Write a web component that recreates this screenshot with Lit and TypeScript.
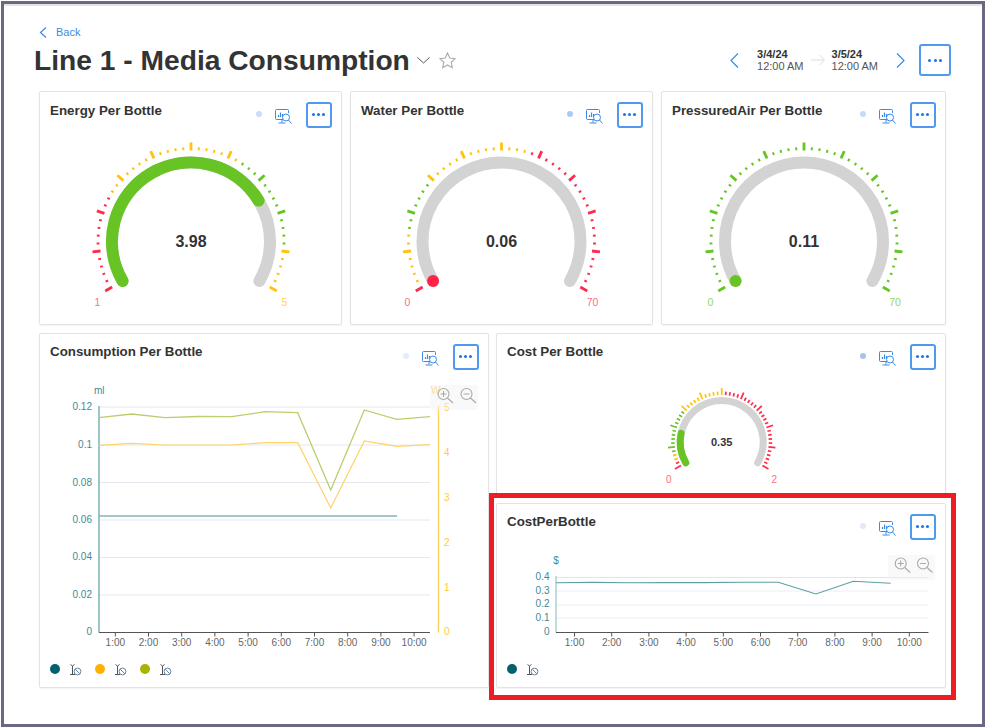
import { LitElement, html, css, svg } from "lit";
import { customElement } from "lit/decorators.js";

const RED = "#ff2a4d", YEL = "#ffc20e", GRN = "#66c424";
const pt = (cx: number, cy: number, r: number, deg: number) => {
  const a = (deg * Math.PI) / 180;
  return [cx + r * Math.cos(a), cy - r * Math.sin(a)];
};
const arc = (cx: number, cy: number, r: number, from: number, to: number) => {
  const [x0, y0] = pt(cx, cy, r, from), [x1, y1] = pt(cx, cy, r, to);
  return `M${x0} ${y0}A${r} ${r} 0 ${from - to > 180 ? 1 : 0} 1 ${x1} ${y1}`;
};
const path = (p: number[][]) => "M" + p.map((q) => q.join(" ")).join("L");

type Zone = [number, string];
interface Gauge {
  cx: number; cy: number; r: number; w: number; frac: number; value: string; valueSize: number;
  zones: Zone[]; lo: string; hi: string; loX: number; hiX: number; labelY: number; labelSize: number;
  maj: [number, number, number]; min: [number, number, number]; dot?: string;
}
function gauge(g: Gauge) {
  const ticks = [];
  for (let i = 0; i <= 50; i++) {
    const major = i % 5 === 0;
    const [r0, r1, sw] = major ? g.maj : g.min;
    const deg = 210 - 4.8 * i;
    const color = g.zones.find((z) => i <= z[0])![1];
    const [a, b] = [pt(g.cx, g.cy, r0, deg), pt(g.cx, g.cy, r1, deg)];
    ticks.push(svg`<line x1=${a[0]} y1=${a[1]} x2=${b[0]} y2=${b[1]} stroke=${color} stroke-width=${sw}></line>`);
  }
  const end = 210 - 240 * g.frac;
  const [mx, my] = pt(g.cx, g.cy, g.r, 210);
  const loCol = g.zones[0][1], hiCol = g.zones[g.zones.length - 1][1];
  return svg`
    ${ticks}
    <path d=${arc(g.cx, g.cy, g.r, 210, -30)} fill="none" stroke="#d3d3d3" stroke-width=${g.w} stroke-linecap="round"></path>
    ${g.frac > 0 ? svg`<path d=${arc(g.cx, g.cy, g.r, 210, end)} fill="none" stroke="#67c424" stroke-width=${g.w} stroke-linecap="round"></path>` : ""}
    ${g.dot ? svg`<circle cx=${mx} cy=${my} r="6" fill=${g.dot}></circle>` : ""}
    <text class="val" x=${g.cx} y=${g.cy} font-size=${g.valueSize} text-anchor="middle" dominant-baseline="central">${g.value}</text>
    <text x=${g.loX} y=${g.labelY} font-size=${g.labelSize} fill=${loCol} opacity=".7" text-anchor="middle" dominant-baseline="central">${g.lo}</text>
    <text x=${g.hiX} y=${g.labelY} font-size=${g.labelSize} fill=${hiCol} opacity=".7" text-anchor="middle" dominant-baseline="central">${g.hi}</text>`;
}

const big = { r: 79, w: 12, valueSize: 16, labelY: 302, labelSize: 10.5, maj: [91, 99, 2.8] as [number, number, number], min: [91.6, 94.4, 2] as [number, number, number] };

function zoomTools(x: number, y: number, w: number, h: number, c1: number, c2: number, cy: number) {
  const mag = (cx: number, plus: boolean) => svg`
    <circle cx=${cx} cy=${cy} r="5.5" fill="none" stroke="#aaa" stroke-width="1.1"></circle>
    <line x1=${cx + 4} y1=${cy + 4} x2=${cx + 9.5} y2=${cy + 9} stroke="#aaa" stroke-width="1.1"></line>
    <line x1=${cx - 3} y1=${cy} x2=${cx + 3} y2=${cy} stroke="#aaa" stroke-width="1.1"></line>
    ${plus ? svg`<line x1=${cx} y1=${cy - 3} x2=${cx} y2=${cy + 3} stroke="#aaa" stroke-width="1.1"></line>` : ""}`;
  return svg`<rect x=${x} y=${y} width=${w} height=${h} rx="3" fill="#f3f3f3" fill-opacity=".5"></rect>${mag(c1, true)}${mag(c2, false)}`;
}

function xAxis(x0: number, x1: number, first: number, step: number, y: number) {
  const out = [svg`<line x1=${x0} y1=${y} x2=${x1} y2=${y} stroke="#555" stroke-width="1"></line>`];
  for (let i = 0; i < 10; i++) {
    const x = first + step * i;
    out.push(svg`<line x1=${x} y1=${y} x2=${x} y2=${y + 4} stroke="#555" stroke-width="1"></line>
      <text class="xl" x=${x} y=${y + 9.5} text-anchor="middle" dominant-baseline="central">${i + 1}:00</text>`);
  }
  return out;
}

const consumptionChart = () => {
  const grid = [407, 445, 482.5, 520, 557.5, 595];
  const left: [string, number][] = [["0.12", 406.5], ["0.1", 444.5], ["0.08", 482], ["0.06", 519], ["0.04", 556.5], ["0.02", 594], ["0", 631]];
  const right: [string, number][] = [["5", 407], ["4", 452], ["3", 497], ["2", 542], ["1", 587], ["0", 631]];
  const xs = [99, 131.7, 165, 198, 231.7, 265, 297.7, 330.7, 364.3, 396.7, 430];
  const green = [417.7, 414, 417.7, 416.5, 416.7, 411.7, 412.7, 490, 410, 419.3, 416.7];
  const orange = [445.3, 443.3, 445, 445, 445, 442.7, 442.7, 508, 441, 446.3, 444.7];
  return svg`<svg class="plot" width="448" height="280" viewBox="40 380 448 280">
    ${grid.map((y) => svg`<line x1="99" y1=${y} x2="430" y2=${y} stroke="#e6e8f0" stroke-width="1"></line>`)}
    <line x1="99" y1="406" x2="99" y2="632.5" stroke="#9ac5c9" stroke-width="2"></line>
    <line x1="438.5" y1="406" x2="438.5" y2="632.5" stroke="#ffd25e" stroke-width="1.4"></line>
    ${left.map(([t, y]) => svg`<text class="yl" x="92" y=${y} text-anchor="end" dominant-baseline="central">${t}</text>`)}
    ${right.map(([t, y]) => svg`<text class="yr" x="444" y=${y} dominant-baseline="central">${t}</text>`)}
    <text class="yl" x="94" y="390.5" dominant-baseline="central">ml</text>
    <text class="yr" x="431" y="390.5" dominant-baseline="central">W</text>
    <path d=${path(xs.map((x, i) => [x, green[i]]))} fill="none" stroke="#bfcc70" stroke-width="1.3"></path>
    <path d=${path(xs.map((x, i) => [x, orange[i]]))} fill="none" stroke="#ffd266" stroke-width="1.2"></path>
    <line x1="99" y1="516" x2="397" y2="516" stroke="#84b3b9" stroke-width="1.5"></line>
    ${xAxis(99, 430, 115.3, 33.2, 632.5)}
    ${zoomTools(430, 385, 48, 25, 443.5, 466.5, 394)}
  </svg>`;
};

const costChart = () => {
  const left: [string, number][] = [["0.4", 576], ["0.3", 590], ["0.2", 603.5], ["0.1", 617.5], ["0", 631]];
  const pts = [[556, 582.7], [593, 582.4], [630, 582.8], [667, 582.6], [704, 582.6], [741, 582.2], [778.3, 582.2], [816, 594], [853.3, 581.3], [890.7, 583.3]];
  return svg`<svg class="plot" width="448" height="110" viewBox="497 550 448 110">
    ${[577.5, 591, 605, 618].map((y, i) => svg`<line x1="556" y1=${y} x2="928.5" y2=${y} stroke=${i ? "#eceef4" : "#dfe5ea"} stroke-width="1"></line>`)}
    <line x1="556" y1="576" x2="556" y2="632.5" stroke="#9ac5c9" stroke-width="1.2"></line>
    ${left.map(([t, y]) => svg`<text class="yl" x="549.5" y=${y} text-anchor="end" dominant-baseline="central">${t}</text>`)}
    <text class="yl" x="556" y="560" text-anchor="middle" dominant-baseline="central">$</text>
    <path d=${path(pts)} fill="none" stroke="#5f9ea6" stroke-width="1.1"></path>
    ${xAxis(556, 928.5, 574.5, 37.2, 632.5)}
    ${zoomTools(888, 555, 47, 25, 900.7, 923, 563.5)}
  </svg>`;
};

const g1 = svg`<svg class="plot" width="301" height="186" viewBox="40 138 301 186">${gauge({ ...big, cx: 191, cy: 241.5, frac: 0.745, value: "3.98", zones: [[12, RED], [31, YEL], [44, GRN], [50, YEL]], lo: "1", hi: "5", loX: 97.5, hiX: 284.5 })}</svg>`;
const g2 = svg`<svg class="plot" width="301" height="186" viewBox="351 138 301 186">${gauge({ ...big, cx: 501.5, cy: 241.5, frac: 0, value: "0.06", zones: [[0, RED], [7, YEL], [14, GRN], [28, YEL], [50, RED]], lo: "0", hi: "70", loX: 407.5, hiX: 592.5, dot: "#ff2445" })}</svg>`;
const g3 = svg`<svg class="plot" width="283" height="186" viewBox="662 138 283 186">${gauge({ ...big, cx: 804, cy: 241.5, frac: 0, value: "0.11", zones: [[50, GRN]], lo: "0", hi: "70", loX: 710.5, hiX: 895, dot: "#67c424" })}</svg>`;
const g5 = svg`<svg class="plot" width="448" height="120" viewBox="497 380 448 120">${gauge({ cx: 721.7, cy: 442, r: 41.5, w: 7, frac: 0.175, value: "0.35", valueSize: 11, zones: [[1, RED], [3, YEL], [14, GRN], [25, YEL], [50, RED]], lo: "0", hi: "2", loX: 668.7, hiX: 774.3, labelY: 479, labelSize: 10, maj: [47, 54, 1.7], min: [47, 50.5, 1.7] })}</svg>`;

const monitor = html`<svg class="mon" viewBox="0 0 17 16" width="17" height="16" fill="none" stroke="#3b8ae6" stroke-width="1">
  <path d="M9.5 10.5H1.5a1 1 0 0 1-1-1V1.500a1 1 0 0 1 1-1h11a1 1 0 0 1 1 1V4"></path>
  <path d="M3.500 8V6M5.500 8V3.500M7.500 8V5" stroke-width="1.200"></path>
  <path d="M7 10.500V13.500M3.500 14h7"></path>
  <circle cx="11" cy="8.500" r="3.500" fill="#fff"></circle>
  <path d="M13.500 11l3 3.500"></path>
</svg>`;

const legendIcon = html`<svg class="lg" viewBox="0 0 13 12" width="13" height="12" fill="none">
  <path d="M1.500 .5l2 1.500M5.500 .5l-2 1.500M3.500 2v8.500M1 10.500h5" stroke="#555" stroke-width="1"></path>
  <circle cx="8.500" cy="7.500" r="3.400" stroke="#6a84a3" stroke-width="1"></circle>
  <path d="M6.300 5.200l4.500 4.600" stroke="#6a84a3" stroke-width="1"></path>
</svg>`;

const legend = (colors: string[]) => html`<div class="legend">
  ${colors.map((c) => html`<div class="lgi"><span class="ldot" style="background:${c}"></span>${legendIcon}</div>`)}
</div>`;

const more = html`<button class="more" aria-label="More"><i></i><i></i><i></i></button>`;

const head = (title: string, dot: string) => html`<div class="ch">
  <div class="ct">${title}</div>
  <span class="sdot" style="background:${dot}"></span>
  ${monitor}
  ${more}
</div>`;

@customElement("app-root")
export class AppRoot extends LitElement {
  static styles = css`
    :host { display: block; width: 986px; height: 728px; font-family: "Liberation Sans", Arial, sans-serif; color: #333; background: #fff; overflow: hidden; }
    .frame { box-sizing: border-box; width: 984px; height: 726px; margin: 1px; border: 3px solid #6a6882; box-shadow: inset 0 2px 0 #e4e4e4; background: #fff; padding: 20px 31px 0 30px; }
    .back { display: flex; align-items: center; height: 16px; margin-left: 4.500px; color: #3b8ae6; font-size: 11px; }
    .back svg { margin-right: 9.500px; }
    .top { display: flex; align-items: center; height: 32px; margin-top: 4px; }
    h1 { margin: 0; font-size: 28.200px; line-height: 32px; font-weight: 700; color: #333; white-space: nowrap; }
    .caret { margin-left: 7px; margin-top: 1px; }
    .star { margin-left: 9px; }
    .range { margin-left: auto; display: flex; align-items: center; }
    .date { font-size: 11px; line-height: 12px; color: #555; }
    .date b { display: block; color: #333; }
    .arr { margin: 0 7px; }
    .nav-l { margin-right: 18px; }
    .nav-r { margin: 0 14px 0 18px; }
    .more { box-sizing: border-box; width: 25.500px; height: 25.500px; flex: none; padding: 0; background: #fff; border: 2px solid #4f9aee; border-radius: 3px; display: flex; align-items: center; justify-content: center; gap: 2px; }
    .more i { width: 3px; height: 3px; border-radius: 50%; background: #1f74e0; }
    .more.lg-btn { width: 32px; height: 32px; gap: 2.500px; }
    .grid { margin: 15px 0 0 5px; width: 907px; }
    .row1 { display: grid; grid-template-columns: 303px 303px 285px; gap: 8px; }
    .row2 { position: relative; display: grid; grid-template-columns: 450px 450px; gap: 7px; margin-top: 8px; }
    .card { box-sizing: border-box; background: #fff; border: 1px solid #e3e3e3; border-radius: 2px; box-shadow: 0 1px 2px rgba(0,0,0,.05); overflow: hidden; }
    .row1 .card { height: 234px; }
    .row2 .card { height: 355px; }
    .ch { display: flex; align-items: flex-start; height: 46px; padding: 10px 9.500px 0 10px; box-sizing: border-box; }
    .ct { flex: 1; font-size: 13.330px; line-height: 16px; font-weight: 700; color: #333; }
    .row1 .ct { padding-top: 1px; }
    .sdot { width: 6px; height: 6px; border-radius: 50%; margin: 9px 13px 0 0; flex: none; }
    .mon { margin: 7px 14px 0 0; flex: none; }
    .plot { display: block; }
    text { font-family: "Liberation Sans", Arial, sans-serif; }
    .val { font-weight: 700; fill: #333; }
    .yl { font-size: 10px; fill: #3f8a93; }
    .yr { font-size: 10px; fill: #ffc93c; }
    .xl { font-size: 10px; fill: #666; }
    .legend { display: flex; gap: 13px; height: 20px; margin-top: -1px; padding-left: 10px; align-items: center; }
    .lgi { display: flex; align-items: center; gap: 9px; }
    .ldot { width: 10px; height: 10px; border-radius: 50%; }
    .lg { margin-top: 1px; }
    .focus { position: absolute; left: 450px; top: 160px; border: 5px solid #ee1c25; padding: 5px 5px 7px 2px; background: #fff; }
    .focus .card { width: 450px; height: 185px; }
  `;

  render() {
    return html`<div class="frame">
      <div class="back">
        <svg width="8" height="11" viewBox="0 0 8 11" fill="none" stroke="#3b8ae6" stroke-width="1.200"><path d="M7 .5L1.500 5.500 7 10.500"></path></svg>
        Back
      </div>
      <div class="top">
        <h1>Line 1 - Media Consumption</h1>
        <svg class="caret" width="13" height="7" viewBox="0 0 13 7" fill="none" stroke="#555" stroke-width="1"><path d="M.5 .5L6.500 6 12.500 .5"></path></svg>
        <svg class="star" width="17" height="17" viewBox="0 0 17 17" fill="none" stroke="#aaa" stroke-width="1.100"><path d="M8.500 1l2.300 5 5.400.6-4 3.700 1.100 5.400-4.800-2.700-4.800 2.700 1.100-5.400-4-3.700 5.400-.6z"></path></svg>
        <div class="range">
          <svg class="nav-l" width="9" height="15" viewBox="0 0 9 15" fill="none" stroke="#3b8ae6" stroke-width="1.200"><path d="M8 .5L1 7.500 8 14.500"></path></svg>
          <div class="date"><b>3/4/24</b>12:00 AM</div>
          <svg class="arr" width="14" height="12" viewBox="0 0 14 12" fill="none" stroke="#ddd" stroke-width="1"><path d="M0 6h13M8 .5L13.500 6 8 11.500"></path></svg>
          <div class="date"><b>3/5/24</b>12:00 AM</div>
          <svg class="nav-r" width="9" height="15" viewBox="0 0 9 15" fill="none" stroke="#3b8ae6" stroke-width="1.200"><path d="M1 .5L8 7.500 1 14.500"></path></svg>
          <button class="more lg-btn" aria-label="More"><i></i><i></i><i></i></button>
        </div>
      </div>
      <div class="grid">
        <div class="row1">
          <section class="card">${head("Energy Per Bottle", "#c9def7")}${g1}</section>
          <section class="card">${head("Water Per Bottle", "#a9cbf5")}${g2}</section>
          <section class="card">${head("PressuredAir Per Bottle", "#c5dbf7")}${g3}</section>
        </div>
        <div class="row2">
          <section class="card">${head("Consumption Per Bottle", "#e3edfb")}${consumptionChart()}${legend(["#00626e", "#ffb000", "#a8b400"])}</section>
          <section class="card">${head("Cost Per Bottle", "#a9c1ee")}${g5}</section>
          <div class="focus">
            <section class="card">${head("CostPerBottle", "#dfeafb")}${costChart()}${legend(["#00626e"])}</section>
          </div>
        </div>
      </div>
    </div>`;
  }
}
